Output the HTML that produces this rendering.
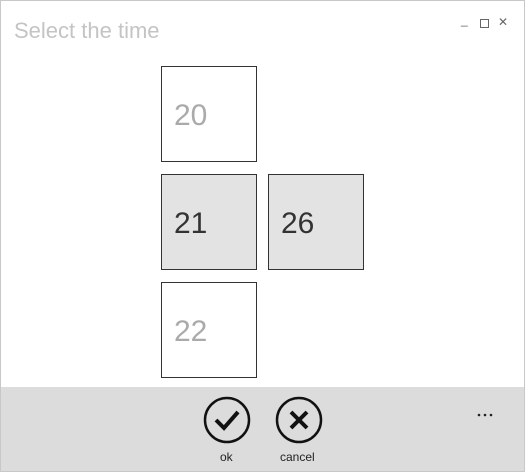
<!DOCTYPE html>
<html><head><style>
body{margin:0;width:525px;height:472px;overflow:hidden;font-family:"Liberation Sans",sans-serif;background:#fff}
.win{position:absolute;left:0;top:0;width:523px;height:470px;border:1px solid #c8c8c8;background:#fff}
.title{position:absolute;left:13px;top:17px;font-size:22px;color:#c4c4c4}
.ctl{position:absolute;top:14px;font-size:12px;color:#666}
.box{position:absolute;width:94px;height:94px;border:1px solid #333;box-sizing:content-box;font-size:30px;line-height:94px;padding-left:0}
.box span{position:absolute;left:12px;top:2px}
.bar{position:absolute;left:0;top:386px;width:523px;height:84px;background:#dcdcdc}
.lbl{position:absolute;top:449px;font-size:12px;color:#222}
</style></head><body>
<div class="win">
<div class="title">Select the time</div>
<div class="ctl" style="left:460px;top:12px">_</div>
<div style="position:absolute;left:479px;top:18px;width:7px;height:7px;border:1px solid #666"></div>
<div class="ctl" style="left:497px;top:14px">✕</div>
<div class="box" style="left:160px;top:65px;color:#aaa"><span>20</span></div>
<div class="box" style="left:160px;top:173px;background:#e3e3e3;color:#333"><span>21</span></div>
<div class="box" style="left:267px;top:173px;background:#e3e3e3;color:#333"><span>26</span></div>
<div class="box" style="left:160px;top:281px;color:#aaa"><span>22</span></div>
<div class="bar"></div>
<svg style="position:absolute;left:0;top:0" width="525" height="472">
<circle cx="226" cy="419" r="22" fill="none" stroke="#111" stroke-width="2.5"/>
<path d="M215 419 L223 427 L237 411" fill="none" stroke="#111" stroke-width="4"/>
<circle cx="298" cy="419" r="22" fill="none" stroke="#111" stroke-width="2.5"/>
<path d="M290 411 L306 427 M306 411 L290 427" fill="none" stroke="#111" stroke-width="4"/>
<circle cx="478" cy="414" r="1.3" fill="#222"/><circle cx="484" cy="414" r="1.3" fill="#222"/><circle cx="490" cy="414" r="1.3" fill="#222"/>
</svg>
<div class="lbl" style="left:219px">ok</div>
<div class="lbl" style="left:279px">cancel</div>
</div>
</body></html>
